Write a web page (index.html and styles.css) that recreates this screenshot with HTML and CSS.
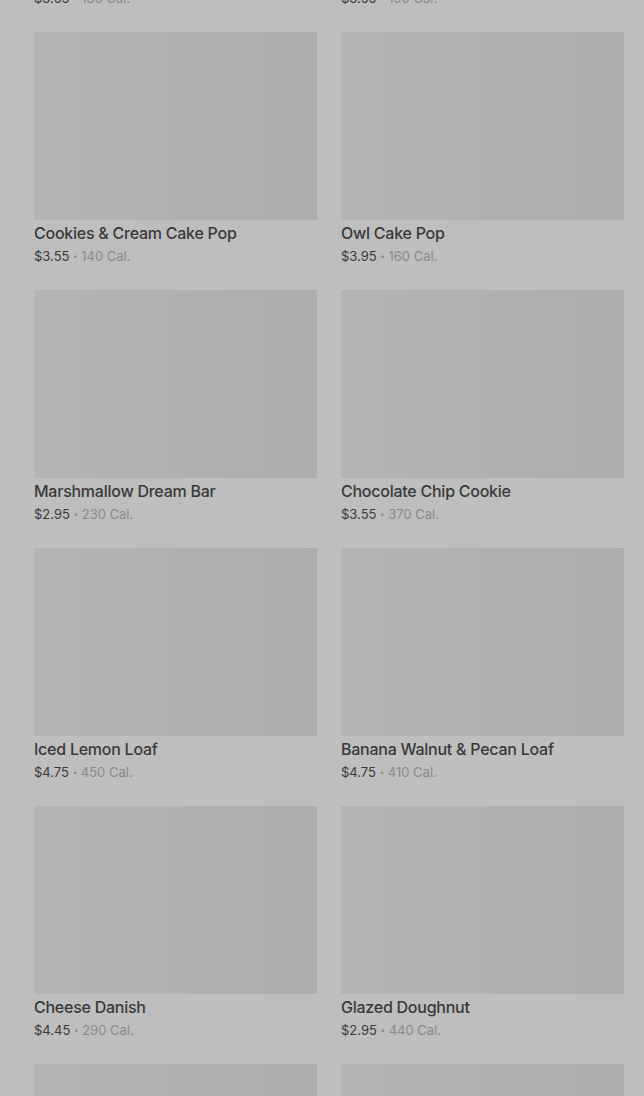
FILE: index.html
```html
<!DOCTYPE html>
<html lang="en">
<head>
    <meta charset="UTF-8">
    <title>Bakery</title>
    <link rel="stylesheet" href="styles.css">
</head>
<body>
    <div class="page">
        <div class="grid">
            <div class="card">
                <div class="thumb"></div>
                <div class="name">Birthday Cake Pop</div>
                <div class="meta"><span class="price">$3.55</span> <span class="dot">•</span> <span class="cal">180 Cal.</span></div>
            </div>
            <div class="card">
                <div class="thumb"></div>
                <div class="name">Chocolate Cake Pop</div>
                <div class="meta"><span class="price">$3.55</span> <span class="dot">•</span> <span class="cal">190 Cal.</span></div>
            </div>
            <div class="card">
                <div class="thumb"></div>
                <div class="name">Cookies &amp; Cream Cake Pop</div>
                <div class="meta"><span class="price">$3.55</span> <span class="dot">•</span> <span class="cal">140 Cal.</span></div>
            </div>
            <div class="card">
                <div class="thumb"></div>
                <div class="name">Owl Cake Pop</div>
                <div class="meta"><span class="price">$3.95</span> <span class="dot">•</span> <span class="cal">160 Cal.</span></div>
            </div>
            <div class="card">
                <div class="thumb"></div>
                <div class="name">Marshmallow Dream Bar</div>
                <div class="meta"><span class="price">$2.95</span> <span class="dot">•</span> <span class="cal">230 Cal.</span></div>
            </div>
            <div class="card">
                <div class="thumb"></div>
                <div class="name">Chocolate Chip Cookie</div>
                <div class="meta"><span class="price">$3.55</span> <span class="dot">•</span> <span class="cal">370 Cal.</span></div>
            </div>
            <div class="card">
                <div class="thumb"></div>
                <div class="name">Iced Lemon Loaf</div>
                <div class="meta"><span class="price">$4.75</span> <span class="dot">•</span> <span class="cal">450 Cal.</span></div>
            </div>
            <div class="card">
                <div class="thumb"></div>
                <div class="name">Banana Walnut &amp; Pecan Loaf</div>
                <div class="meta"><span class="price">$4.75</span> <span class="dot">•</span> <span class="cal">410 Cal.</span></div>
            </div>
            <div class="card">
                <div class="thumb"></div>
                <div class="name">Cheese Danish</div>
                <div class="meta"><span class="price">$4.45</span> <span class="dot">•</span> <span class="cal">290 Cal.</span></div>
            </div>
            <div class="card">
                <div class="thumb"></div>
                <div class="name">Glazed Doughnut</div>
                <div class="meta"><span class="price">$2.95</span> <span class="dot">•</span> <span class="cal">440 Cal.</span></div>
            </div>
            <div class="card">
                <div class="thumb"></div>
                <div class="name">Butter Croissant</div>
                <div class="meta"><span class="price">$3.45</span> <span class="dot">•</span> <span class="cal">260 Cal.</span></div>
            </div>
            <div class="card">
                <div class="thumb"></div>
                <div class="name">Chocolate Croissant</div>
                <div class="meta"><span class="price">$3.95</span> <span class="dot">•</span> <span class="cal">300 Cal.</span></div>
            </div>
        </div>
    </div>
</body>
</html>
```

FILE: styles.css
```css
html, body { margin: 0; padding: 0; background: #bebebe; overflow: hidden; }
body { font-family: Inter, "Liberation Sans", sans-serif; color: #3a3a3a; }
.page { height: 1096px; overflow: hidden; }
/* list is scrolled: first row sits mostly above the fold */
.grid { display: grid; grid-template-columns: 283px 283px; column-gap: 24px; row-gap: 24px; padding: 0 20px 0 34px; margin-top: -226px; }
.card { display: flex; flex-direction: column; }
.thumb { height: 188px; background: linear-gradient(90deg, #b4b4b4, #adadad); }
.name { margin-top: 2px; height: 22px; font-size: 16px; line-height: 22px; font-weight: 500; letter-spacing: -0.25px; color: #393939; white-space: nowrap; }
.meta { margin-top: 2px; height: 20px; font-size: 13px; line-height: 20px; white-space: nowrap; overflow: hidden; }
.price { color: #3a3a3a; }
.dot { color: #8a8a8a; font-size: 8px; line-height: 1; vertical-align: 2px; }
.cal { color: #8a8a8a; }
```
